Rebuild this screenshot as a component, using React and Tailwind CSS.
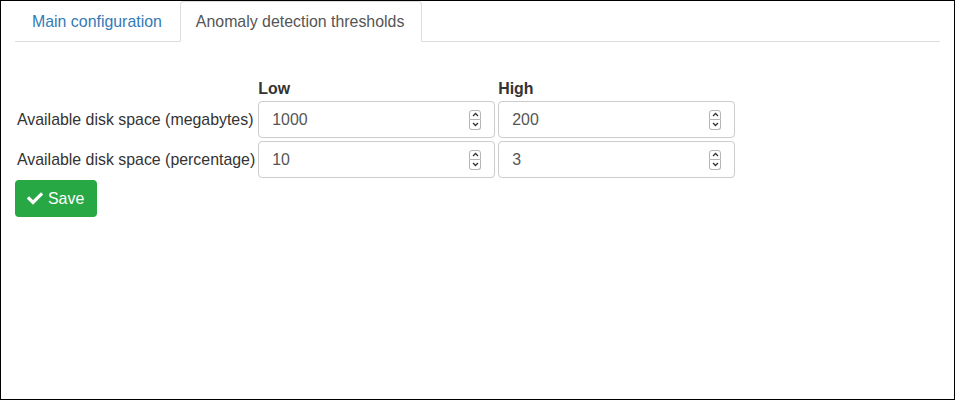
import React from "react";

function Spinner() {
  return (
    <div className="flex flex-col">
      <div className="w-[12px] h-[10px] border border-[#b5b5b5] rounded-t-[3px] flex items-center justify-center bg-white">
        <svg width="7" height="5" viewBox="0 0 7 5"><path d="M1 4 L3.5 1.5 L6 4" fill="none" stroke="#333" strokeWidth="1.3" /></svg>
      </div>
      <div className="w-[12px] h-[10px] border border-t-0 border-[#b5b5b5] rounded-b-[3px] flex items-center justify-center bg-white">
        <svg width="7" height="5" viewBox="0 0 7 5"><path d="M1 1 L3.5 3.5 L6 1" fill="none" stroke="#333" strokeWidth="1.3" /></svg>
      </div>
    </div>
  );
}

function NumInput({ value }) {
  return (
    <div className="h-[37px] w-[237px] border border-[#ccc] rounded-[4px] flex items-center pl-[13px] pr-[13px] bg-white">
      <span className="flex-1 text-[#555]">{value}</span>
      <Spinner />
    </div>
  );
}

export default function App() {
  return (
    <div
      className="w-[955px] h-[400px] border border-black bg-white text-[#333] px-[14px] text-[15.9px]"
      style={{ fontFamily: '"Liberation Sans", Arial, Helvetica, sans-serif' }}
    >
      <div className="flex border-b border-[#ddd] h-[41px]">
        <div className="h-[41px] pl-[16px] pr-[15px] pt-[1px] mr-[2px] flex items-center text-[#337ab7] border border-transparent">
          Main configuration
        </div>
        <div className="h-[41px] pl-[15px] pr-[17px] pt-[1px] flex items-center text-[#555] bg-white border border-[#ddd] border-b-white rounded-t-[4px] -mb-px">
          Anomaly detection thresholds
        </div>
      </div>
      <div className="pt-[36px]">
        <div className="grid grid-cols-[auto_237px_237px] gap-x-[3px] gap-y-[3px] w-max">
          <div className="h-[20px]"></div>
          <div className="h-[20px] font-bold leading-[20px] pt-[1px]">Low</div>
          <div className="h-[20px] font-bold leading-[20px] pt-[1px]">High</div>

          <div className="flex items-center pl-[2px]">Available disk space (megabytes)</div>
          <NumInput value="1000" />
          <NumInput value="200" />

          <div className="flex items-center pl-[2px]">Available disk space (percentage)</div>
          <NumInput value="10" />
          <NumInput value="3" />
        </div>
        <button className="mt-[2px] h-[37px] pl-[12px] pr-[13px] flex items-center gap-[5px] bg-[#28a745] text-white rounded-[4px]">
          <svg width="16" height="13" viewBox="0 0 16 13">
            <path d="M2 6.5 L6 10.5 L14 2.5" fill="none" stroke="white" strokeWidth="3.2" strokeLinecap="square" />
          </svg>
          Save
        </button>
      </div>
    </div>
  );
}
